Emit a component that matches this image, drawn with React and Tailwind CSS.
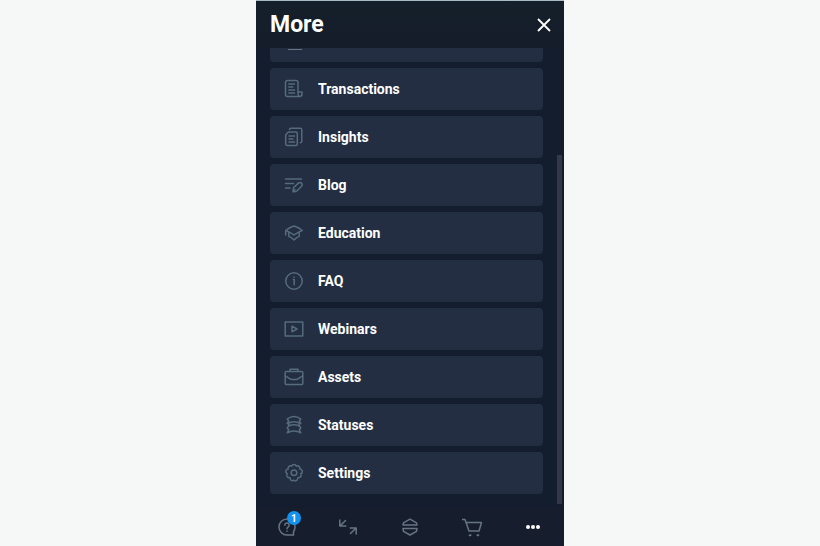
import { useState } from "react";

function Icon({ children }) {
  return (
    <svg
      viewBox="0 0 20 20"
      className="size-5 shrink-0"
      fill="none"
      stroke="currentColor"
      strokeWidth="1.5"
      strokeLinecap="round"
      strokeLinejoin="round"
      aria-hidden="true"
    >
      {children}
    </svg>
  );
}

const items = [
  {
    label: "Transactions",
    icon: (
      <>
        <path d="M14 13V3.500a2 2 0 0 0-2-2H3.500a2 2 0 0 0-2 2v12a2 2 0 0 0 2 2h12a2.500 2.500 0 0 0 2.500-2.500v-2h-4z" />
        <path d="M14 13c0 2.500 0 4.500 1.500 4.500M4.800 5h5.700M4.800 8h4M4.800 11h5.700M4.800 14h5.700" />
      </>
    ),
  },
  {
    label: "Insights",
    icon: (
      <>
        <path d="M4.500 5h7.300a1.500 1.500 0 0 1 1.500 1.500v10.600a1.500 1.500 0 0 1-1.500 1.500H3.200a1.500 1.500 0 0 1-1.500-1.500V7.800z" />
        <path d="M5.500 2.500A1.500 1.500 0 0 1 7 1.200h9.300a1.500 1.500 0 0 1 1.500 1.500v11.500a1.500 1.500 0 0 1-1.500 1.500" />
        <path d="M5 9h5.500M5 12h4M5 15h5.500" />
      </>
    ),
  },
  {
    label: "Blog",
    icon: (
      <>
        <path d="M1.500 4h16M1.500 8.500h8M1.500 13H6" />
        <path d="M9 16.800l.5-4 4.800-4.700a2.200 2.200 0 0 1 3.200 3.200L12.800 16c-1 .9-2.400.9-3.800.8zM9 16.800l2-2" />
      </>
    ),
  },
  {
    label: "Education",
    icon: (
      <>
        <path d="M10 3c3 .8 5.600 2.200 8.300 4.500-2.900 1-5.600 2.500-8.300 4.500-2.700-2-5.400-3.500-8.300-4.500C4.400 5.200 7 3.800 10 3z" />
        <path d="M1.700 7.500V12M4.800 9.500v4c2 .3 3.500 1.500 5.200 3.500 1.700-2 3.200-3.200 5.200-3.500v-4" />
      </>
    ),
  },
  {
    label: "FAQ",
    icon: (
      <>
        <circle cx="10" cy="10" r="8.200" />
        <path d="M9.300 8.600h.9v5.200M10 6v.3" />
      </>
    ),
  },
  {
    label: "Webinars",
    icon: (
      <>
        <rect x="1.200" y="3" width="17.600" height="14" />
        <path d="M8 7.200v5.600l5-2.800z" />
      </>
    ),
  },
  {
    label: "Assets",
    icon: (
      <>
        <rect x="1.200" y="4.500" width="17.600" height="13" rx="1" />
        <path d="M6 4.500V2.300h8v2.200M1.200 9c2.800.8 4.600 3.500 7.300 3.500h3c2.700 0 4.500-2.700 7.300-3.500" />
      </>
    ),
  },
  {
    label: "Statuses",
    icon: (
      <>
        <path d="M3.200 4C7.400.9 12.600.9 16.800 4L15.300 6l1.500 2.600c-4.200-2.300-9.400-2.300-13.600 0L4.700 6z" />
        <path d="M4.700 8.600V11l-1.500 1.800L4.700 15l-1.500 2.800c4.200-2.300 9.400-2.300 13.600 0L15.300 15l1.500-2.200-1.500-1.800V8.600M4.700 11c3.400-1.500 7.200-1.500 10.600 0" />
      </>
    ),
  },
  {
    label: "Settings",
    icon: (
      <>
        <path d="M7.800 3.200Q8.200 1.500 10 1.500t2.200 1.700q1.500-1 2.800.2t.8 2.700q2.400.5 2.500 2.400T16.800 10.500q.9 2.300-.3 3.300t-2.600.9q-.2 2-1.700 2.900T10 17q-1.600 1.200-2.700.4t-1.200-2.700q-2 .2-2.900-1T3.200 10.500Q1.600 10 1.700 8.300t2.500-2.200Q3.700 4.400 5 3.400t2.800-.2z" />
        <circle cx="10" cy="9.800" r="2.800" />
      </>
    ),
  },
];

const tabs = [
  {
    label: "Help",
    badge: 1,
    icon: (
      <>
        <path d="M16.500 18H10a8 8 0 1 1 8-8c0 1.900-.5 3.300-1.500 4.700z" />
        <path d="M7.800 8.200a2.200 2.200 0 1 1 3.300 1.900c-.8.500-1.100.9-1.100 1.700M10 14v.3" />
      </>
    ),
  },
  {
    label: "Trades",
    icon: (
      <>
        <path d="M7.500 3.500l-5 5M1.800 3v6h6" />
        <path d="M12.500 16.500l5-5M12.200 11h6v6" />
      </>
    ),
  },
  {
    label: "Levels",
    icon: (
      <>
        <path d="M10 2.200l6.500 3.700L17 8H3l.5-2.100z" />
        <path d="M3 11.500h14l-.5 2.800L10 18l-6.500-3.700z" />
      </>
    ),
  },
  {
    label: "Market",
    icon: (
      <>
        <path d="M0 2.500h3l4 11.500h10L19.500 5.500H4" />
        <path d="M7.700 18.300h.8M15.500 18.300h.8" strokeWidth="2" />
      </>
    ),
  },
  {
    label: "More options",
    icon: (
      <g fill="currentColor" stroke="none">
        <circle cx="5" cy="10" r="2" />
        <circle cx="10" cy="10" r="2" />
        <circle cx="15" cy="10" r="2" />
      </g>
    ),
  },
];

export default function App() {
  const [active, setActive] = useState("More options");

  return (
    <div className="flex h-screen justify-center bg-[#f6f7f7] font-['Roboto',sans-serif]">
      <div className="flex w-full max-w-[308px] flex-col border-t border-[#a9bcc6] bg-[#141d2d]">
        <header className="flex h-[47px] shrink-0 items-center justify-between bg-linear-to-b from-[#14202a] to-[#151c2a] pr-3 pl-3.5">
          <h1 className="text-[23px] leading-8 font-bold text-white">More</h1>
          <button type="button" aria-label="Close" className="text-white">
            <svg viewBox="0 0 16 16" className="size-4" fill="none" stroke="currentColor" strokeWidth="1.8">
              <path d="M2 2l12 12M14 2L2 14" />
            </svg>
          </button>
        </header>

        <div className="flex min-h-0 flex-1">
          <ul className="flex min-w-0 flex-1 flex-col gap-1.5 pb-3.5 pl-3.5">
            {/* row scrolled under the header */}
            <li className="h-3.5 shrink-0 rounded-b-sm bg-[#232e43] px-3.5">
              <span className="mx-1 block h-0.5 w-3.5 border-b border-[#667482]" />
            </li>
            {items.map((item) => (
              <li key={item.label} className="min-h-0 flex-1">
                <button
                  type="button"
                  className="flex size-full items-center gap-3.5 rounded-sm bg-[#232e43] px-3.5 text-left text-sm font-bold text-white"
                >
                  <span className="text-[#566b7b]">
                    <Icon>{item.icon}</Icon>
                  </span>
                  {item.label}
                </button>
              </li>
            ))}
          </ul>
          <div className="flex w-[21px] flex-col items-end pt-[107px] pr-0.5 pb-1">
            <div className="w-[5px] flex-1 bg-[#34374a]" />
          </div>
        </div>

        <nav className="grid h-[38px] shrink-0 grid-cols-5 bg-[#161e2e]">
          {tabs.map((tab) => (
            <button
              key={tab.label}
              type="button"
              aria-label={tab.label}
              onClick={() => setActive(tab.label)}
              className={
                active === tab.label
                  ? "flex items-center justify-center text-white"
                  : "flex items-center justify-center text-[#667482]"
              }
            >
              <span className="relative">
                <Icon>{tab.icon}</Icon>
                {tab.badge && (
                  <span className="absolute -top-1.5 -right-1 flex size-3.5 items-center justify-center rounded-full bg-[#1292ee] text-[10px] font-bold text-white">
                    {tab.badge}
                  </span>
                )}
              </span>
            </button>
          ))}
        </nav>
      </div>
    </div>
  );
}
